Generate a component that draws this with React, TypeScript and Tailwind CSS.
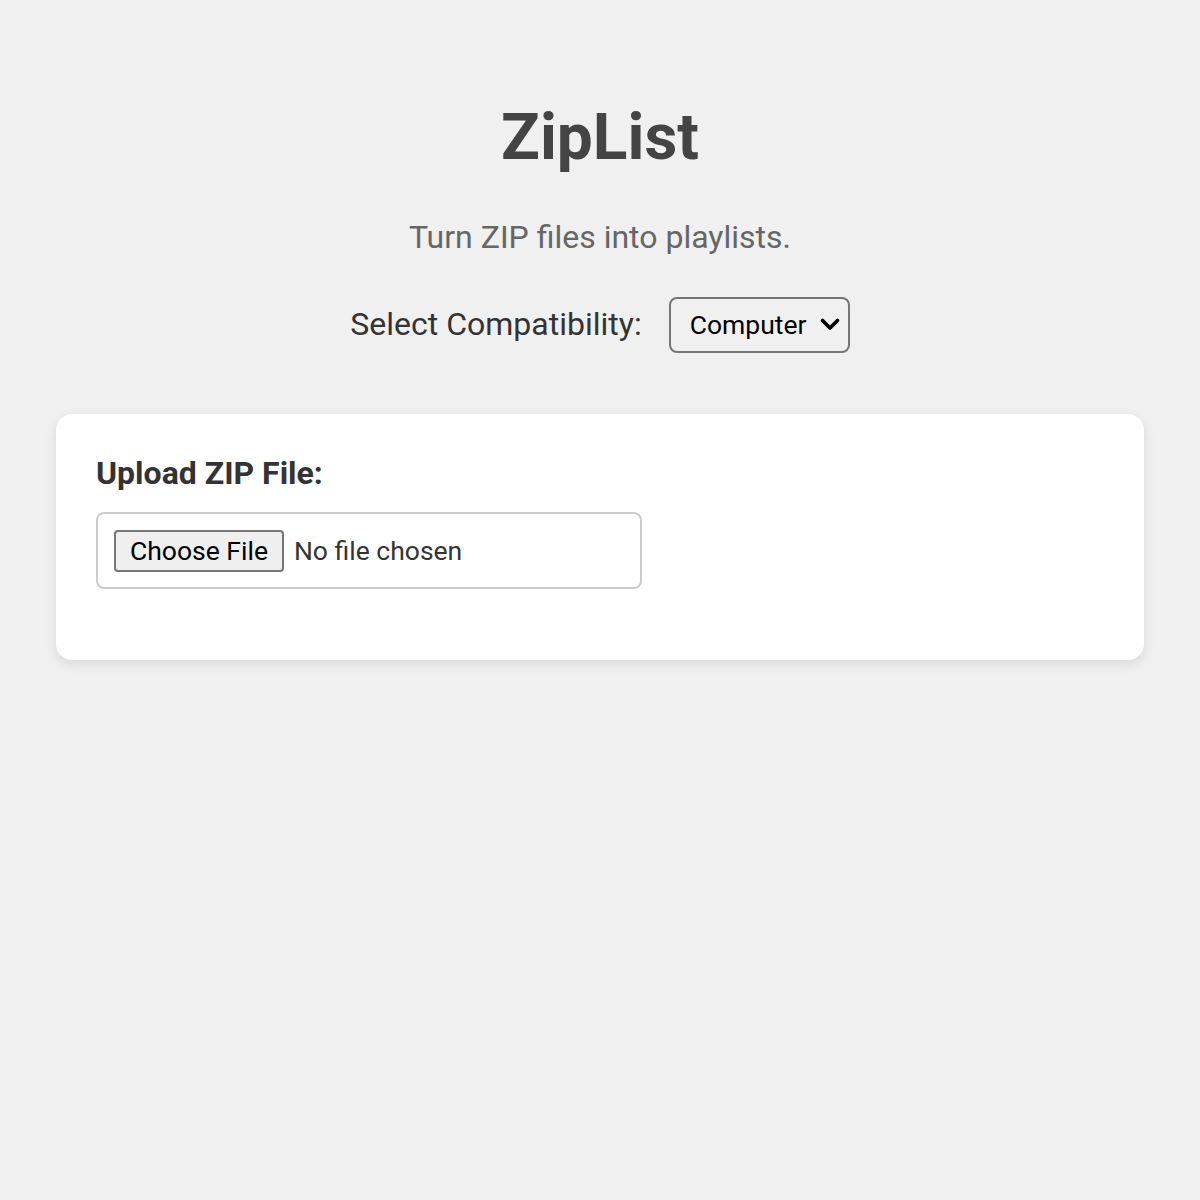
import React from "react";

export default function App() {
  return (
    <div className="min-h-[1200px] w-full bg-[#f0f0f0] font-['Roboto',sans-serif]">
      <div className="flex flex-col items-center pt-[98px]">
        <h1 className="text-[64px] leading-[80px] font-bold text-[#444444]">ZipList</h1>
        <p className="mt-[39px] text-[32px] leading-[40px] text-[#666666]">Turn ZIP files into playlists.</p>
        <div className="mt-[40px] flex items-center gap-[27px]">
          <span className="-mt-[3px] text-[32px] leading-[40px] text-[#333333]">Select Compatibility:</span>
          <div className="flex h-[56px] w-[181px] items-center justify-between rounded-[8px] border-2 border-[#767676] bg-[#f0f0f0] pl-[19px] pr-[7px]">
            <span className="text-[26.5px] leading-[32px] text-black">Computer</span>
            <svg width="22" height="16" viewBox="0 0 22 16" fill="none">
              <path d="M3.5 3.5 L11 11 L18.5 3.5" stroke="#000" strokeWidth="3.6" strokeLinecap="round" strokeLinejoin="round" />
            </svg>
          </div>
        </div>
      </div>
      <div className="mx-[56px] mt-[61px] rounded-[16px] bg-white px-[40px] pb-[71px] pt-[39px] shadow-[0_4px_12px_rgba(0,0,0,0.1)]">
        <div className="text-[32px] leading-[40px] font-bold text-[#333333]">Upload ZIP File:</div>
        <div className="mt-[19px] flex h-[77px] w-[546px] items-center rounded-[8px] border-2 border-[#cccccc] pl-[16px]">
          <div className="flex h-[42px] items-center rounded-[4px] border-2 border-[#767676] bg-[#efefef] px-[14px] text-[26.5px] leading-[32px] text-black">
            Choose File
          </div>
          <span className="ml-[10px] text-[26.5px] leading-[32px] text-[#333333]">No file chosen</span>
        </div>
      </div>
    </div>
  );
}
